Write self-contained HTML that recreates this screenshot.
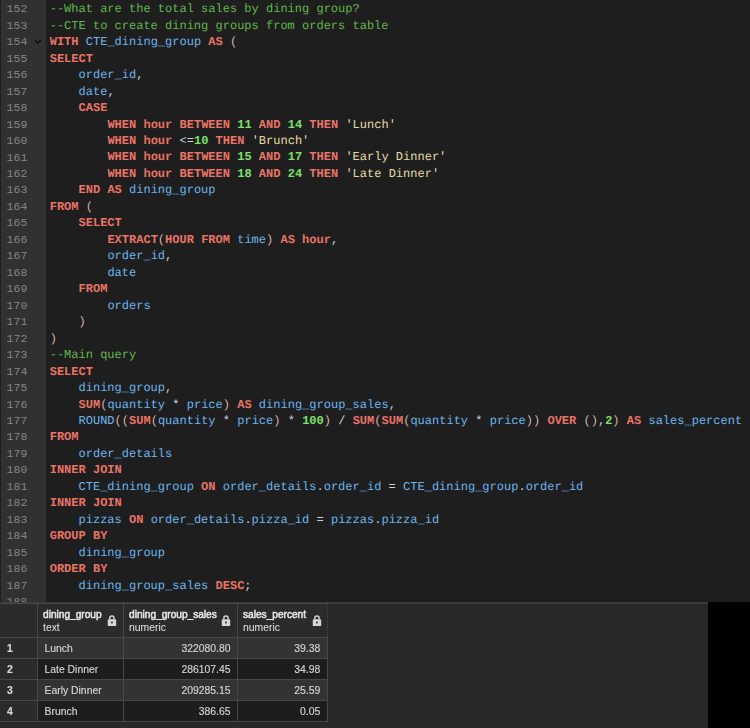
<!DOCTYPE html>
<html><head><meta charset="utf-8"><title>query</title><style>
html,body{margin:0;padding:0;}
body{width:750px;height:728px;overflow:hidden;background:#282828;position:relative;font-family:"Liberation Sans",sans-serif;}
#ed{position:absolute;left:0;top:0;width:750px;height:602px;background:#1e1e1e;overflow:hidden;}
#gut{position:absolute;left:0;top:0;width:45.5px;height:602px;background:#313131;}
#gut:before{content:"";position:absolute;left:0;top:0;width:1.3px;height:602px;background:#1e1e1e;}
#code{position:absolute;left:0;top:1.25px;width:750px;font-family:"Liberation Mono",monospace;font-size:12px;line-height:16.482px;color:#d4d4d4;}
.l{position:relative;height:16.482px;}
.g{position:absolute;left:6.6px;top:0.05px;font-weight:normal;color:#858585;font-size:11.5px;}
.t{position:absolute;left:49.7px;top:0;white-space:pre;letter-spacing:0.008px;text-rendering:geometricPrecision;}
.f{position:absolute;left:33px;top:3.6px;width:10px;height:8px;}
.c{color:#62b74c;}
.k{color:#e97466;font-weight:bold;}
.v{color:#6cb6ee;}
.n{color:#7ee069;font-weight:bold;}
.s{color:#e6dca8;}
.p{color:#d8b4ae;}
.o{color:#c8d0d8;}
#sep{position:absolute;left:0;top:602px;width:708px;height:2px;background:#3a3a3a;}
#blk{position:absolute;left:708px;top:602px;width:42px;height:126px;background:#000;}
#grid{position:absolute;left:0;top:603px;font-size:10.4px;color:#d4d4d4;will-change:transform;}
table{border-collapse:collapse;table-layout:fixed;}
td,th{border:1px solid #474747;padding:0;overflow:hidden;white-space:nowrap;}

tr.h th{height:33px;background:#2b2b2b;text-align:left;font-weight:normal;vertical-align:top;}
tr.h th:first-child{border-left:none;}
tr.h th:last-child{border-right-style:dotted;}
tr.h th:last-child .lk{right:5.3px;}
tr.r td:first-child{border-left:none;}
.hc{position:relative;height:33px;}
.ht{position:absolute;left:5px;top:3.5px;line-height:13.3px;color:#e2e2e2;}
.ht b{font-weight:normal;font-size:10.15px;-webkit-text-stroke:0.5px #e6e6e6;color:#e6e6e6;}
.lk{position:absolute;right:6px;top:11px;width:10px;height:12px;}
tr.r td{height:20px;line-height:0;}
tr.r td div{height:20px;line-height:21.4px;overflow:hidden;-webkit-text-stroke:0.15px #d4d4d4;}
tr.a td{background:#333333;}
tr.b td{background:#1d1d1d;}
td.rn{background:#2b2b2b !important;padding-left:7px;font-weight:bold;color:#d8d8d8;}
td.tx{padding-left:6.5px;}
td.nu{text-align:right;padding-right:6.5px;}
</style></head><body>
<div id="ed"><div id="gut"></div><div id="code">
<div class="l"><b class="g">152</b><span class="t"><span class="c">--What are the total sales by dining group?</span></span></div>
<div class="l"><b class="g">153</b><span class="t"><span class="c">--CTE to create dining groups from orders table</span></span></div>
<div class="l"><b class="g">154</b><svg class="f" viewBox="0 0 10 8"><path d="M1.9 2.2 L4.9 5 L7.9 2.2" fill="none" stroke="#0c0c0c" stroke-width="1.4"/></svg><span class="t"><span class="k">WITH</span> <span class="v">CTE_dining_group</span> <span class="k">AS</span> <span class="p">(</span></span></div>
<div class="l"><b class="g">155</b><span class="t"><span class="k">SELECT</span></span></div>
<div class="l"><b class="g">156</b><span class="t">    <span class="v">order_id</span><span class="o">,</span></span></div>
<div class="l"><b class="g">157</b><span class="t">    <span class="v">date</span><span class="o">,</span></span></div>
<div class="l"><b class="g">158</b><span class="t">    <span class="k">CASE</span></span></div>
<div class="l"><b class="g">159</b><span class="t">        <span class="k">WHEN</span> <span class="k">hour</span> <span class="k">BETWEEN</span> <span class="n">11</span> <span class="k">AND</span> <span class="n">14</span> <span class="k">THEN</span> <span class="s">&#x27;Lunch&#x27;</span></span></div>
<div class="l"><b class="g">160</b><span class="t">        <span class="k">WHEN</span> <span class="k">hour</span> <span class="o">&lt;</span><span class="o">=</span><span class="n">10</span> <span class="k">THEN</span> <span class="s">&#x27;Brunch&#x27;</span></span></div>
<div class="l"><b class="g">161</b><span class="t">        <span class="k">WHEN</span> <span class="k">hour</span> <span class="k">BETWEEN</span> <span class="n">15</span> <span class="k">AND</span> <span class="n">17</span> <span class="k">THEN</span> <span class="s">&#x27;Early Dinner&#x27;</span></span></div>
<div class="l"><b class="g">162</b><span class="t">        <span class="k">WHEN</span> <span class="k">hour</span> <span class="k">BETWEEN</span> <span class="n">18</span> <span class="k">AND</span> <span class="n">24</span> <span class="k">THEN</span> <span class="s">&#x27;Late Dinner&#x27;</span></span></div>
<div class="l"><b class="g">163</b><span class="t">    <span class="k">END</span> <span class="k">AS</span> <span class="v">dining_group</span></span></div>
<div class="l"><b class="g">164</b><span class="t"><span class="k">FROM</span> <span class="p">(</span></span></div>
<div class="l"><b class="g">165</b><span class="t">    <span class="k">SELECT</span></span></div>
<div class="l"><b class="g">166</b><span class="t">        <span class="k">EXTRACT</span><span class="p">(</span><span class="k">HOUR</span> <span class="k">FROM</span> <span class="v">time</span><span class="p">)</span> <span class="k">AS</span> <span class="k">hour</span><span class="o">,</span></span></div>
<div class="l"><b class="g">167</b><span class="t">        <span class="v">order_id</span><span class="o">,</span></span></div>
<div class="l"><b class="g">168</b><span class="t">        <span class="v">date</span></span></div>
<div class="l"><b class="g">169</b><span class="t">    <span class="k">FROM</span></span></div>
<div class="l"><b class="g">170</b><span class="t">        <span class="v">orders</span></span></div>
<div class="l"><b class="g">171</b><span class="t">    <span class="p">)</span></span></div>
<div class="l"><b class="g">172</b><span class="t"><span class="p">)</span></span></div>
<div class="l"><b class="g">173</b><span class="t"><span class="c">--Main query</span></span></div>
<div class="l"><b class="g">174</b><span class="t"><span class="k">SELECT</span></span></div>
<div class="l"><b class="g">175</b><span class="t">    <span class="v">dining_group</span><span class="o">,</span></span></div>
<div class="l"><b class="g">176</b><span class="t">    <span class="k">SUM</span><span class="p">(</span><span class="v">quantity</span> <span class="o">*</span> <span class="v">price</span><span class="p">)</span> <span class="k">AS</span> <span class="v">dining_group_sales</span><span class="o">,</span></span></div>
<div class="l"><b class="g">177</b><span class="t">    <span class="v">ROUND</span><span class="p">(</span><span class="p">(</span><span class="k">SUM</span><span class="p">(</span><span class="v">quantity</span> <span class="o">*</span> <span class="v">price</span><span class="p">)</span> <span class="o">*</span> <span class="n">100</span><span class="p">)</span> <span class="o">/</span> <span class="k">SUM</span><span class="p">(</span><span class="k">SUM</span><span class="p">(</span><span class="v">quantity</span> <span class="o">*</span> <span class="v">price</span><span class="p">)</span><span class="p">)</span> <span class="k">OVER</span> <span class="p">(</span><span class="p">)</span><span class="o">,</span><span class="n">2</span><span class="p">)</span> <span class="k">AS</span> <span class="v">sales_percent</span></span></div>
<div class="l"><b class="g">178</b><span class="t"><span class="k">FROM</span></span></div>
<div class="l"><b class="g">179</b><span class="t">    <span class="v">order_details</span></span></div>
<div class="l"><b class="g">180</b><span class="t"><span class="k">INNER</span> <span class="k">JOIN</span></span></div>
<div class="l"><b class="g">181</b><span class="t">    <span class="v">CTE_dining_group</span> <span class="k">ON</span> <span class="v">order_details</span><span class="o">.</span><span class="v">order_id</span> <span class="o">=</span> <span class="v">CTE_dining_group</span><span class="o">.</span><span class="v">order_id</span></span></div>
<div class="l"><b class="g">182</b><span class="t"><span class="k">INNER</span> <span class="k">JOIN</span></span></div>
<div class="l"><b class="g">183</b><span class="t">    <span class="v">pizzas</span> <span class="k">ON</span> <span class="v">order_details</span><span class="o">.</span><span class="v">pizza_id</span> <span class="o">=</span> <span class="v">pizzas</span><span class="o">.</span><span class="v">pizza_id</span></span></div>
<div class="l"><b class="g">184</b><span class="t"><span class="k">GROUP</span> <span class="k">BY</span></span></div>
<div class="l"><b class="g">185</b><span class="t">    <span class="v">dining_group</span></span></div>
<div class="l"><b class="g">186</b><span class="t"><span class="k">ORDER</span> <span class="k">BY</span></span></div>
<div class="l"><b class="g">187</b><span class="t">    <span class="v">dining_group_sales</span> <span class="k">DESC</span><span class="o">;</span></span></div>
<div class="l"><b class="g">188</b></div>
</div></div>
<div id="sep"></div><div id="blk"></div>
<div id="grid">
<table>
<colgroup><col style="width:37.5px"><col style="width:86px"><col style="width:114px"><col style="width:89.8px"></colgroup>
<tr class="h"><th></th>
<th><div class="hc"><div class="ht"><b>dining_group</b><br>text</div><svg class="lk" viewBox="0 0 10 12"><path d="M2.85 4.6V3.2a2.1 2.1 0 0 1 4.2 0V4.6" fill="none" stroke="#d6d6d6" stroke-width="1.5"/><rect x="0.75" y="4.2" width="8.45" height="6.9" rx="0.9" fill="#d6d6d6"/><circle cx="4.95" cy="7.5" r="0.95" fill="#2b2b2b"/></svg></div></th>
<th><div class="hc"><div class="ht"><b>dining_group_sales</b><br>numeric</div><svg class="lk" viewBox="0 0 10 12"><path d="M2.85 4.6V3.2a2.1 2.1 0 0 1 4.2 0V4.6" fill="none" stroke="#d6d6d6" stroke-width="1.5"/><rect x="0.75" y="4.2" width="8.45" height="6.9" rx="0.9" fill="#d6d6d6"/><circle cx="4.95" cy="7.5" r="0.95" fill="#2b2b2b"/></svg></div></th>
<th><div class="hc"><div class="ht"><b>sales_percent</b><br>numeric</div><svg class="lk" viewBox="0 0 10 12"><path d="M2.85 4.6V3.2a2.1 2.1 0 0 1 4.2 0V4.6" fill="none" stroke="#d6d6d6" stroke-width="1.5"/><rect x="0.75" y="4.2" width="8.45" height="6.9" rx="0.9" fill="#d6d6d6"/><circle cx="4.95" cy="7.5" r="0.95" fill="#2b2b2b"/></svg></div></th>
</tr>
<tr class="r a"><td class="rn"><div>1</div></td><td class="tx"><div>Lunch</div></td><td class="nu"><div>322080.80</div></td><td class="nu"><div>39.38</div></td></tr>
<tr class="r b"><td class="rn"><div>2</div></td><td class="tx"><div>Late Dinner</div></td><td class="nu"><div>286107.45</div></td><td class="nu"><div>34.98</div></td></tr>
<tr class="r a"><td class="rn"><div>3</div></td><td class="tx"><div>Early Dinner</div></td><td class="nu"><div>209285.15</div></td><td class="nu"><div>25.59</div></td></tr>
<tr class="r b"><td class="rn"><div>4</div></td><td class="tx"><div>Brunch</div></td><td class="nu"><div>386.65</div></td><td class="nu"><div>0.05</div></td></tr>
</table>
</div>
</body></html>
